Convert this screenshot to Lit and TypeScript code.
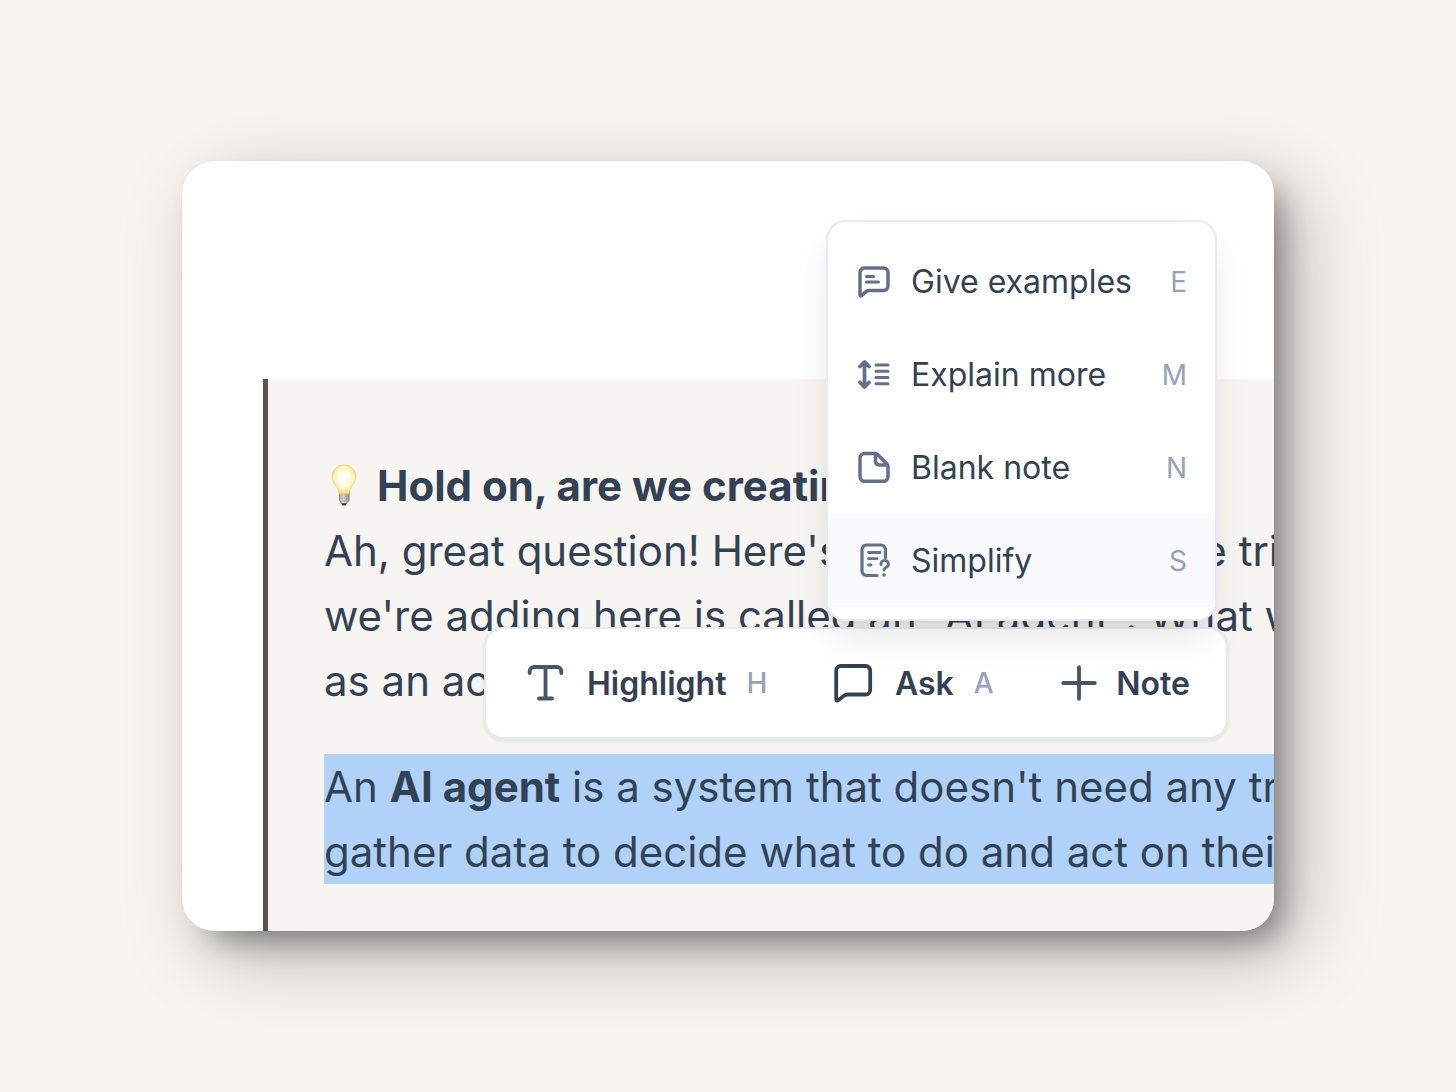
import { LitElement, html, css, svg } from "lit";
import { customElement } from "lit/decorators.js";

const bulb = html`<svg class="bulb" viewBox="0 0 26 42" role="img" aria-label="Idea">
  <defs>
    <radialGradient id="glow" cx="50%" cy="46%" r="56%">
      <stop offset="0" stop-color="#fffffb" />
      <stop offset="0.5" stop-color="#fffbe2" />
      <stop offset="0.8" stop-color="#fbeaa4" />
      <stop offset="1" stop-color="#f0cf6c" />
    </radialGradient>
    <linearGradient id="metal" x1="0" x2="1" y1="0" y2="0">
      <stop offset="0" stop-color="#8d8d8d" />
      <stop offset="0.35" stop-color="#dededc" />
      <stop offset="0.65" stop-color="#b8b8b6" />
      <stop offset="1" stop-color="#7a7a7a" />
    </linearGradient>
  </defs>
  <path d="M9.500 38h7l-2 3.500h-3z" fill="#3c3c3c" />
  <path d="M8 28h10.500v8q0 1.500-2 2.500l-1 .8h-4.500l-1-.8q-2-1-2-2.500z" fill="url(#metal)" />
  <path d="M8 31.500l10-1M8 34.500l10-1M8.500 37.300l9-1" stroke="#a2a2a0" stroke-width=".6" />
  <path d="M13 1C6 1 1.200 6 1.200 12.500c0 4.500 2.300 7 4.300 9.800 1.400 2 1.700 4 2 6.200.1.900.6 1.300 1.500 1.300h8c.9 0 1.400-.4 1.500-1.300.3-2.200.6-4.200 2-6.200 2-2.800 4.300-5.300 4.300-9.800C24.800 6 20 1 13 1z" fill="url(#glow)" stroke="#eccd73" stroke-width=".8" />
</svg>`;

const icons = {
  examples: svg`<path d="M4 30V7.500A4.500 4.500 0 0 1 8.500 3H27.500A4.500 4.500 0 0 1 32 7.500V21a4.500 4.500 0 0 1-4.500 4.500H13.500a6 6 0 0 0-3.500 1.100L5.500 30.600Q4 31.500 4 30z" /><path d="M10.500 11.500h7M10.500 17h12" stroke-width="3" />`,
  expand: svg`<path d="M8.500 4.500v24M4 8.500l4.500-4.500 4.500 4.500M4 24.500l4.500 4.500 4.500-4.500" stroke-width="3.800" /><path d="M20 7h12M20 13.200h12M20 19.500h12M20 25.700h12" stroke-width="3" />`,
  blank: svg`<path d="M8.500 2.500H19a4 4 0 0 1 2.800 1.200l9 9a4 4 0 0 1 1.200 2.800V25.500a4.800 4.800 0 0 1-4.800 4.800H8.800A4.800 4.800 0 0 1 4 25.500V7.300a4.800 4.800 0 0 1 4.500-4.800zM19.500 3v7.500a3.500 3.500 0 0 0 3.500 3.500h8" />`,
  simplify: svg`<path d="M21 31.500H10.500a4.500 4.500 0 0 1-4.500-4.500V5.500A4.500 4.500 0 0 1 10.500 1H25a4.500 4.500 0 0 1 4.500 4.500V13.500" stroke-width="3.200" /><path d="M12.500 8.500h11.500M12.500 14.700h8.500M12.500 21h2.500M25 20.500a3.700 3.700 0 1 1 5.500 2.800q-2.200 1-2.500 2.700" stroke-width="2.800" /><circle cx="28" cy="31" r="1.800" fill="#64708a" stroke="none" />`,
  text: svg`<path d="M3.700 10V8.200a4.200 4.200 0 0 1 4.200-4.200h23.200a4.200 4.200 0 0 1 4.200 4.200V10M19.500 4v31.500M13 35.500h13" />`,
  ask: svg`<path d="M4.200 36V7.500a4.500 4.500 0 0 1 4.500-4.500h25a4.500 4.500 0 0 1 4.500 4.500v19.500a4.500 4.500 0 0 1-4.500 4.500H16a6 6 0 0 0-4 1.300L6.500 37Q4.200 38.700 4.200 36z" />`,
  plus: svg`<path d="M21 4.200v31.600M5.200 20h31.600" />`,
};

const menuItems = [
  { icon: icons.examples, label: "Give examples", key: "E", active: false },
  { icon: icons.expand, label: "Explain more", key: "M", active: false },
  { icon: icons.blank, label: "Blank note", key: "N", active: false },
  { icon: icons.simplify, label: "Simplify", key: "S", active: true },
];

const base = css`
  * { box-sizing: border-box; }
  button {
    display: flex;
    align-items: center;
    border: 0;
    margin: 0;
    background: none;
    font-family: inherit;
    color: #334155;
    cursor: pointer;
    white-space: nowrap;
  }
  svg { flex: none; fill: none; overflow: visible; stroke-linecap: round; stroke-linejoin: round; }
  kbd { font-family: inherit; color: #94a3b8; }
`;

@customElement("prompt-menu")
export class PromptMenu extends LitElement {
  static styles = [base, css`
    :host {
      display: block;
      box-sizing: border-box;
      padding: 13px 0 12px;
      background: #fff;
      border: 2px solid #e8eaf1;
      border-radius: 20px;
      box-shadow: 0 20px 40px -6px rgba(0, 0, 0, 0.1), 0 8px 12px -8px rgba(0, 0, 0, 0.12);
    }
    button { width: 100%; height: 93px; padding: 0 28px; font-size: 32px; }
    button.active { background: #f8fafc; }
    svg { width: 34px; height: 34px; margin-right: 21px; stroke: #64708a; stroke-width: 3.500; }
    kbd { margin-left: auto; font-size: 28px; }
  `];

  render() {
    return html`${menuItems.map(
      (item) => html`<button type="button" class=${item.active ? "active" : ""}>
        <svg viewBox="0 0 34 34" aria-hidden="true">${item.icon}</svg>
        <span>${item.label}</span><kbd>${item.key}</kbd>
      </button>`
    )}`;
  }
}

@customElement("selection-toolbar")
export class SelectionToolbar extends LitElement {
  static styles = [base, css`
    :host {
      display: flex;
      box-sizing: border-box;
      align-items: center;
      justify-content: space-between;
      height: 112px;
      padding: 0 36px 0 40px;
      background: #fff;
      border: 2px solid #e8eaf1;
      border-radius: 20px;
      box-shadow: 0 2px 4px rgba(0, 0, 0, 0.1);
    }
    button { height: 80px; padding: 0; font-size: 32px; font-weight: 600; }
    svg { width: 40px; height: 40px; margin-right: 21px; stroke: #475569; stroke-width: 3.800; }
    svg.dark { stroke: #334155; margin-right: 23px; }
    svg.plus { margin-right: 18px; }
    kbd { margin-left: 20px; font-size: 28px; font-weight: 500; }
  `];

  render() {
    return html`
      <button type="button"><svg viewBox="0 0 40 40" aria-hidden="true">${icons.text}</svg><span>Highlight</span><kbd>H</kbd></button>
      <button type="button"><svg class="dark" viewBox="0 0 40 40" aria-hidden="true">${icons.ask}</svg><span>Ask</span><kbd>A</kbd></button>
      <button type="button"><svg class="plus" viewBox="0 0 40 40" aria-hidden="true">${icons.plus}</svg><span>Note</span></button>
    `;
  }
}

@customElement("app-root")
export class AppRoot extends LitElement {
  static styles = css`
    :host {
      display: flex;
      box-sizing: border-box;
      min-height: 100vh;
      align-items: center;
      justify-content: center;
      background: #f8f5f0;
      font-family: Inter, "Liberation Sans", sans-serif;
      color: #334155;
    }
    * { box-sizing: border-box; }
    .card {
      position: relative;
      width: 75%;
      padding: 218px 0 0 81px;
      overflow: hidden;
      background: #fff;
      border-radius: 32px;
      box-shadow: 0 0 1px rgba(0, 0, 0, 0.12), 24px 24px 80px rgba(0, 0, 0, 0.26), 16px 18px 32px -10px rgba(0, 0, 0, 0.4);
    }
    .callout {
      padding: 74px 0 47px 56px;
      border-left: 5px solid #57534e;
      background: #f6f5f1;
      font-size: 42px;
      line-height: 65px;
      white-space: nowrap;
    }
    p { margin: 0; }
    p + p { margin-top: 41px; }
    .bulb { width: 26px; height: 42px; margin: 0 20px 0 7px; vertical-align: -5px; }
    .selected { background: #b0d2f8; }
    prompt-menu { position: absolute; z-index: 2; top: 59px; right: 57px; width: 391px; }
    selection-toolbar { position: absolute; z-index: 1; top: 466px; right: 46px; width: 744px; }
  `;

  render() {
    return html`<main class="card">
      <article class="callout">
        <p>
          ${bulb}<strong>Hold on, are we creating an AI agent?</strong><br />
          Ah, great question! Here's the thing about the trigger<br />
          we're adding here is called an "AI agent". What we<br />
          as an action
        </p>
        <p class="selected">An <strong>AI agent</strong> is a system that doesn't need any triggers<br />
          gather data to decide what to do and act on their own</p>
      </article>
      <selection-toolbar role="toolbar" aria-label="Selection"></selection-toolbar>
      <prompt-menu role="group" aria-label="Ask prompts"></prompt-menu>
    </main>`;
  }
}
